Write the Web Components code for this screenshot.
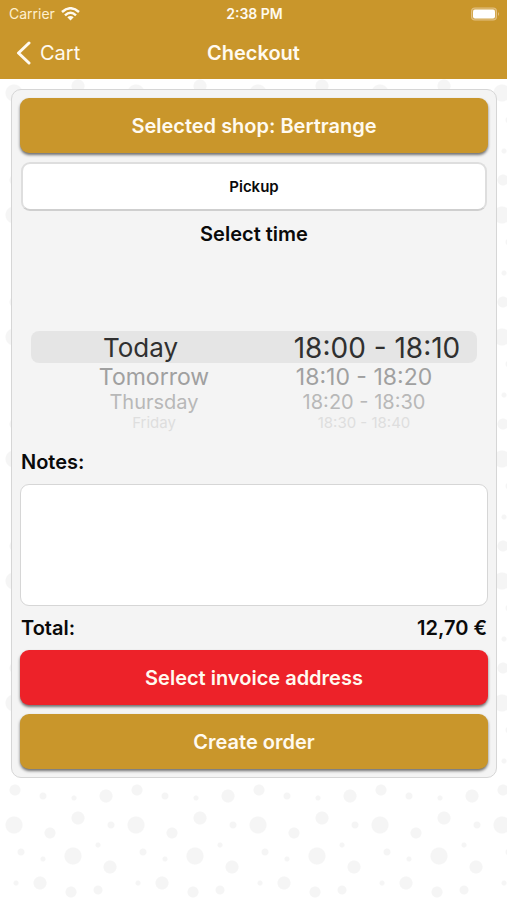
<!DOCTYPE html>
<html lang="en">
<head>
<meta charset="utf-8">
<meta name="viewport" content="width=device-width, initial-scale=1">
<title>Checkout</title>
<style>
  body { margin: 0; font-family: Inter, "Liberation Sans", sans-serif; color: #0a0a0a; --gold: #c9962b; --red: #ed2229; --line: #d6d6d6; }
</style>
</head>
<body>
<checkout-app>
  <status-bar slot="top" carrier="Carrier" time="2:38 PM"></status-bar>
  <nav-bar slot="top" back="Cart">Checkout</nav-bar>
  <order-card>
    <action-button>Selected shop: Bertrange</action-button>
    <option-box>Pickup</option-box>
    <section-title>Select time</section-title>
    <time-picker></time-picker>
    <notes-field label="Notes:"></notes-field>
    <total-row label="Total:">12,70 €</total-row>
    <action-button kind="alert">Select invoice address</action-button>
    <action-button>Create order</action-button>
  </order-card>
</checkout-app>

<script>
const define = (name, html) => customElements.define(name, class extends HTMLElement {
  constructor() {
    super();
    this.attachShadow({ mode: 'open' });
  }
  connectedCallback() {
    this.shadowRoot.innerHTML = typeof html === 'function' ? html(this) : html;
  }
});

// Confetti tile: x, y, radius of each dot inside a 122px square
const TILE = 122;
const dots = [
  [15, 6, 5], [43, 12, 3], [74, 14, 2], [106, 12, 6], [14, 41, 8], [50, 49, 5],
  [78, 34, 6], [111, 41, 3], [21, 68, 3], [43, 75, 2], [73, 72, 8], [98, 61, 2],
  [110, 83, 6], [40, 99, 6], [16, 99, 2], [71, 108, 5], [98, 106, 4]
];
const confetti = dots.map(([x, y, r]) =>
  `radial-gradient(circle at ${x}px ${y}px, #f5f5f5 ${r}px, transparent ${r + 1}px)`).join(',');

define('checkout-app', `
  <style>
    :host { display: block; min-height: 100vh; background-color: #fff; background-image: ${confetti}; background-position: 0 52px; background-size: ${TILE}px ${TILE}px; }
    header { background: var(--gold); color: #fffaf0; }
    main { padding: 10px 10px 10px 11px; }
  </style>
  <header><slot name="top"></slot></header>
  <main><slot></slot></main>`);

define('status-bar', el => `
  <style>
    :host { display: grid; grid-template-columns: 1fr auto 1fr; align-items: center; height: 27px; padding: 0 7px 0 9px; font-size: 14px; line-height: 27px; }
    .left { display: flex; align-items: center; gap: 6px; color: #fff0cf; }
    .time { font-weight: 600; }
    .battery { justify-self: end; }
    svg { display: block; }
  </style>
  <span class="left">${el.getAttribute('carrier')}
    <svg width="19" height="14" viewBox="0 0 19 14" fill="none" stroke="#fffaf0" stroke-width="2.5" aria-hidden="true">
      <path d="M1 5Q9.500-2.500 18 5"/><path d="M4 8.300Q9.500 3.300 15 8.300"/>
      <path d="M9.500 13.500L6.300 10.300Q9.500 7.700 12.700 10.300Z" fill="#fffaf0" stroke="none"/>
    </svg>
  </span>
  <span class="time">${el.getAttribute('time')}</span>
  <svg class="battery" width="30" height="14" viewBox="0 0 30 14" aria-hidden="true">
    <rect x="1" y=".5" width="26" height="13" rx="4" fill="#e2c083"/>
    <rect x="2" y="1.500" width="24" height="11" rx="3" fill="#d3a850"/>
    <rect x="3" y="2.500" width="22" height="9" rx="2" fill="#fff"/>
    <path d="M28 5q2 2 0 4z" fill="#e2c083"/>
  </svg>`);

define('nav-bar', el => `
  <style>
    :host { display: grid; grid-template-columns: 1fr auto 1fr; align-items: center; height: 52px; padding: 0 16px; font-size: 20px; }
    a { display: flex; align-items: center; gap: 9px; color: inherit; text-decoration: none; }
    h1 { margin: 0; font-size: 20px; font-weight: 600; }
  </style>
  <a href="#cart">
    <svg width="15" height="24" viewBox="0 0 15 24" fill="none" stroke="#fffaf0" stroke-width="3" stroke-linecap="round" stroke-linejoin="round" aria-hidden="true"><path d="M13 2L2.500 12L13 22"/></svg>
    <span>${el.getAttribute('back')}</span>
  </a>
  <h1><slot></slot></h1>`);

define('order-card', `
  <style>
    :host { display: block; padding: 8px; background: #f4f4f4; border: 1px solid var(--line); border-radius: 10px; }
    div { display: flex; flex-direction: column; gap: 9px; }
  </style>
  <div><slot></slot></div>`);

define('action-button', `
  <style>
    :host { display: block; }
    button { display: block; width: 100%; height: 55px; border: 0; border-radius: 9px; background: var(--gold); color: #fffaf0; font: 600 20px/24px Inter, "Liberation Sans", sans-serif; box-shadow: 0 2px 3px #0000008c; }
    :host([kind="alert"]) button { background: var(--red); }
  </style>
  <button type="button"><slot></slot></button>`);

define('option-box', `
  <style>
    :host { display: block; padding: 0 1px; }
    button { display: block; width: 100%; height: 49px; border: 2px solid #dedede; border-bottom-color: #cfcfcf; border-radius: 9px; background: #fff; color: inherit; font: 600 15px/20px Inter, "Liberation Sans", sans-serif; }
  </style>
  <button type="button"><slot></slot></button>`);

define('section-title', `
  <style>
    :host { display: block; text-align: center; }
    h2 { margin: 0; font-size: 20px; line-height: 28px; font-weight: 600; }
  </style>
  <h2><slot></slot></h2>`);

const wheel = (name, items) => `
  <fieldset class="${name}">
    <legend>${name}</legend>
    ${items.map((t, i) => `<label class="r${i}"><input type="radio" name="${name}"${i ? '' : ' checked'}><span>${t}</span></label>`).join('')}
  </fieldset>`;

define('time-picker', `
  <style>
    :host { display: grid; grid-template-columns: 1fr 1fr; margin: 0 11px; padding: 74px 0 9px; }
    fieldset { border: 0; margin: 0; padding: 0; min-width: 0; text-align: center; }
    legend { display: none; }
    input { appearance: none; position: absolute; width: 0; height: 0; margin: 0; }
    label { display: block; white-space: nowrap; }
    .r0 { height: 32px; line-height: 34px; font-size: 26px; background: #e5e5e5; color: #303030; }
    .time .r0 { font-size: 28px; }
    .r1 { height: 28px; line-height: 28px; font-size: 23px; color: #a0a0a0; }
    .r2 { height: 22px; line-height: 22px; font-size: 20px; color: #b8b8b8; }
    .r3 { height: 18px; line-height: 20px; font-size: 15px; color: #dedede; }
    .day .r0 { border-radius: 8px 0 0 8px; padding-right: 4px; }
    .day .r1, .day .r2, .day .r3 { padding-left: 23px; }
    .time .r0 { border-radius: 0 8px 8px 0; padding-left: 23px; }
    .time .r1, .time .r2, .time .r3 { padding-right: 3px; }
  </style>
  ${wheel('day', ['Today', 'Tomorrow', 'Thursday', 'Friday'])}
  ${wheel('time', ['18:00 - 18:10', '18:10 - 18:20', '18:20 - 18:30', '18:30 - 18:40'])}`);

define('notes-field', el => `
  <style>
    :host { display: flex; flex-direction: column; gap: 9px; }
    label { padding-left: 1px; font-size: 20px; line-height: 26px; font-weight: 600; }
    textarea { box-sizing: border-box; width: 100%; height: 122px; margin: 0; padding: 10px; border: 1px solid var(--line); border-radius: 9px; background: #fff; font: 16px/20px Inter, sans-serif; resize: none; }
  </style>
  <label for="notes">${el.getAttribute('label')}</label>
  <textarea id="notes"></textarea>`);

define('total-row', el => `
  <style>
    :host { display: flex; justify-content: space-between; padding: 0 1px; font-size: 20px; line-height: 26px; font-weight: 600; }
  </style>
  <span>${el.getAttribute('label')}</span><span><slot></slot></span>`);
</script>
</body>
</html>
